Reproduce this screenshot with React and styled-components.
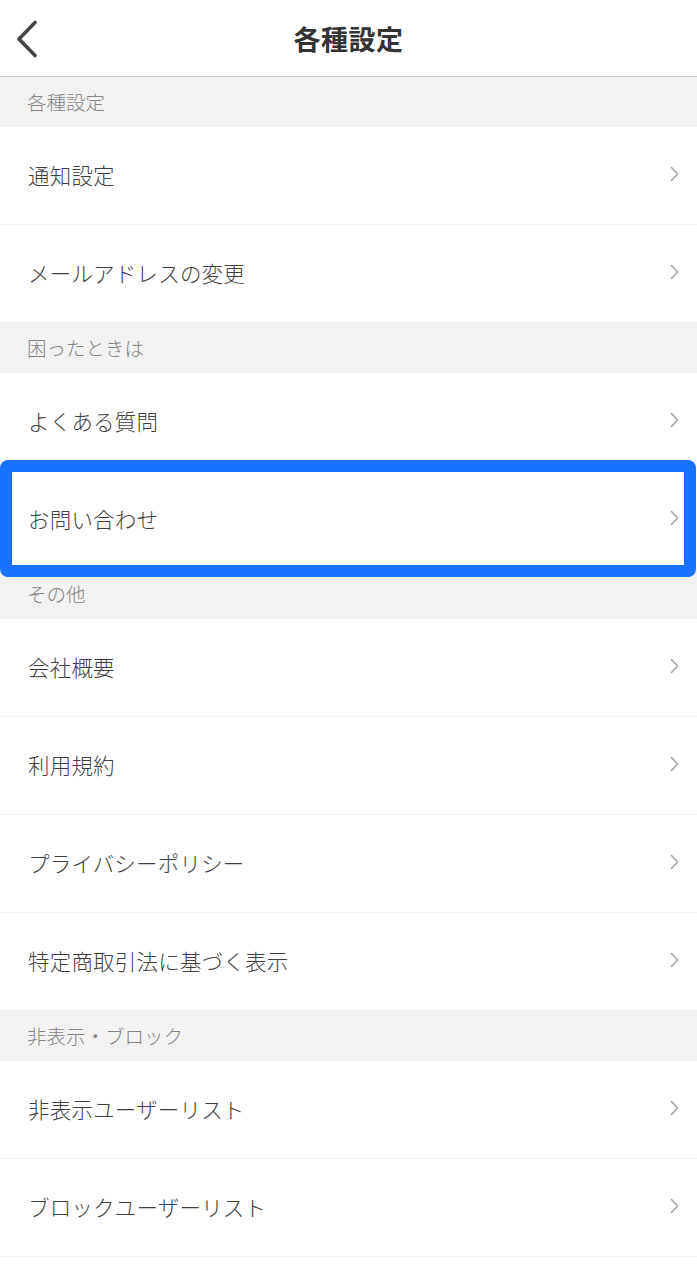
import React from 'react';
import styled, { createGlobalStyle } from 'styled-components';

const GlobalStyle = createGlobalStyle`
  body {
    margin: 0;
    background: #fff;
    font-family: "Noto Sans CJK JP", "Noto Sans", sans-serif;
  }
`;

const sections = [
  {
    title: '各種設定',
    items: ['通知設定', 'メールアドレスの変更'],
  },
  {
    title: '困ったときは',
    items: ['よくある質問', 'お問い合わせ'],
  },
  {
    title: 'その他',
    items: ['会社概要', '利用規約', 'プライバシーポリシー', '特定商取引法に基づく表示'],
  },
  {
    title: '非表示・ブロック',
    items: ['非表示ユーザーリスト', 'ブロックユーザーリスト'],
  },
];

const Chevron = () => (
  <svg width="12" height="18" viewBox="0 0 12 18" fill="none">
    <path d="M3.5 2.5l6 6.5-6 6.5" stroke="#a3a3a3" strokeWidth="1.5" strokeLinecap="round" strokeLinejoin="round" />
  </svg>
);

const BackIcon = () => (
  <svg width="24" height="38" viewBox="0 0 24 38" fill="none">
    <path d="M20 2.5L4 19l16 16.5" stroke="#444" strokeWidth="3.6" strokeLinecap="round" strokeLinejoin="round" />
  </svg>
);

const App = () => (
  <>
    <GlobalStyle />
    <Page>
      <Header>
        <BackButton type="button">
          <BackIcon />
        </BackButton>
        <Title>各種設定</Title>
        <span />
      </Header>
      {sections.map((section) => (
        <section key={section.title}>
          <SectionHeader>{section.title}</SectionHeader>
          {section.items.map((item) => (
            <Row key={item} $highlight={item === 'お問い合わせ'}>
              <RowLabel>{item}</RowLabel>
              <Chevron />
            </Row>
          ))}
        </section>
      ))}
    </Page>
  </>
);

const Page = styled.div`
  width: 697px;
  background: #fff;
`;

const Header = styled.header`
  height: 76px;
  display: grid;
  grid-template-columns: 1fr auto 1fr;
  align-items: center;
  border-bottom: 1px solid #c9c9c9;
`;

const BackButton = styled.button`
  border: none;
  background: none;
  padding: 0 0 0 15px;
  margin-top: 1px;
  display: flex;
  align-items: center;
  cursor: pointer;
`;

const Title = styled.h1`
  margin: 0;
  font-size: 27px;
  font-weight: 700;
  color: #333;
  letter-spacing: 0.5px;
`;

const SectionHeader = styled.div`
  height: 50px;
  box-sizing: border-box;
  display: flex;
  align-items: center;
  padding: 0 0 2px 27px;
  background: #f2f2f2;
  font-size: 19.5px;
  font-weight: 300;
  color: #858585;
`;

const Row = styled.div`
  position: relative;
  height: 98px;
  box-sizing: border-box;
  display: flex;
  align-items: center;
  justify-content: space-between;
  padding: 0 17px 3px 28px;
  border-bottom: 1px solid #f4f4f4;

  ${({ $highlight }) =>
    $highlight &&
    `
    &::after {
      content: '';
      position: absolute;
      top: -11px;
      bottom: -9px;
      left: 0;
      right: 1px;
      border: 12px solid #1a73ff;
      border-radius: 8px;
      pointer-events: none;
      z-index: 1;
    }
  `}
`;

const RowLabel = styled.span`
  font-size: 21.5px;
  font-weight: 300;
  color: #3f3f3f;
  letter-spacing: 0.2px;
`;

export default App;
